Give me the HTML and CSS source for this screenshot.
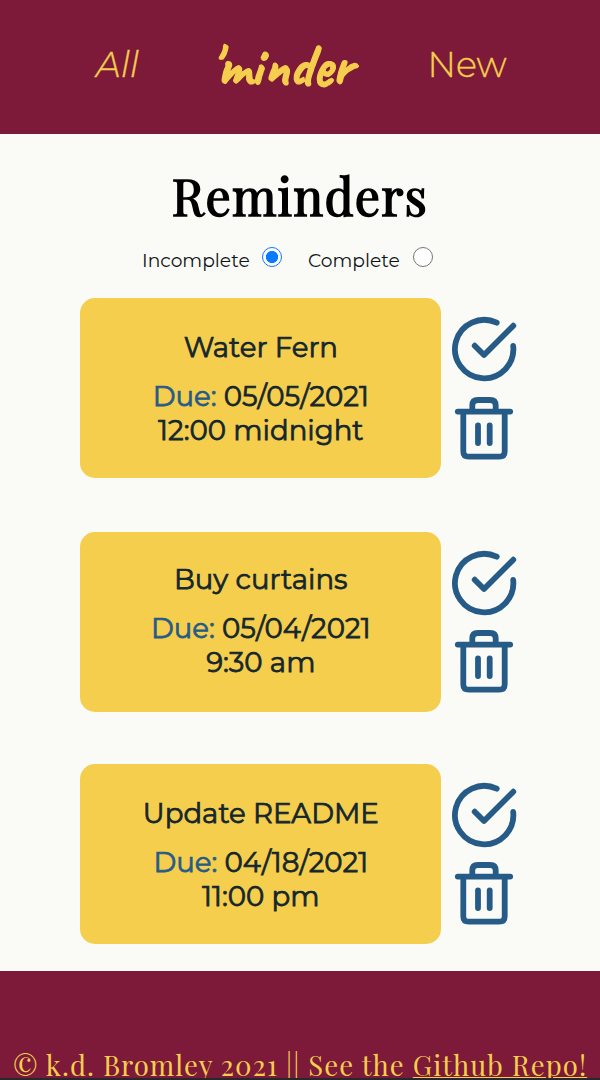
FILE: index.html
```html
<!DOCTYPE html>
<html lang="en">
<head>
<meta charset="utf-8">
<title>'minder</title>
<link rel="stylesheet" href="styles.css">
</head>
<body>
<svg class="defs" width="0" height="0" aria-hidden="true">
  <symbol id="check" viewBox="0 0 66 66"><path d="M45.7 6.7A29.2 29.2 0 1 0 62.2 30M23.7 29.7L33 39L62.3 9.7"/></symbol>
  <symbol id="trash" viewBox="0 0 66 66"><path d="M6.8 17.6H59.2M12.3 17.6V57.2Q12.3 62.7 17.8 62.7H48.2Q53.7 62.7 53.7 57.2V17.6M21.3 17.6V11.5Q21.3 6 26.8 6H39.2Q44.7 6 44.7 11.5V17.6M27 31.5V49M38.7 31.5V49"/></symbol>
</svg>
<header class="header">
  <a class="nav nav-all">All</a>
  <div class="logo">'minder</div>
  <a class="nav nav-new">New</a>
</header>
<main class="main">
  <h1 class="title">Reminders</h1>
  <form class="filters">
    <label class="filter"><span class="label incomplete">Incomplete</span><input class="radio" type="radio" name="state" checked></label>
    <label class="filter"><span class="label complete">Complete</span><input class="radio" type="radio" name="state"></label>
  </form>
  <section class="list">
    <article class="row">
      <div class="card">
        <h2 class="name">Water Fern</h2>
        <p class="line"><span class="due">Due:</span> 05/05/2021</p>
        <p class="line">12:00 midnight</p>
      </div>
      <div class="actions"><svg class="icon"><use href="#check"/></svg><svg class="icon"><use href="#trash"/></svg></div>
    </article>
    <article class="row second">
      <div class="card">
        <h2 class="name">Buy curtains</h2>
        <p class="line"><span class="due">Due:</span> 05/04/2021</p>
        <p class="line">9:30 am</p>
      </div>
      <div class="actions"><svg class="icon"><use href="#check"/></svg><svg class="icon"><use href="#trash"/></svg></div>
    </article>
    <article class="row third">
      <div class="card">
        <h2 class="name">Update README</h2>
        <p class="line"><span class="due">Due:</span> 04/18/2021</p>
        <p class="line">11:00 pm</p>
      </div>
      <div class="actions"><svg class="icon"><use href="#check"/></svg><svg class="icon"><use href="#trash"/></svg></div>
    </article>
  </section>
</main>
<footer class="footer"><p class="credit">© k.d. Bromley 2021 || See the <a class="repo">Github Repo!</a></p></footer>
</body>
</html>
```
FILE: styles.css
```css
* { box-sizing: border-box; }
body { margin: 0; height: 1080px; overflow: hidden; display: flex; flex-direction: column; background: #fafbf7; font-family: Montserrat, Inter, sans-serif; color: #14262e; }
h1, h2, p { margin: 0; font-weight: 400; }
.defs { position: absolute; }
.header { height: 133.5px; flex: none; background: #7d1a39; color: #f5ce4d; display: grid; grid-template-columns: 200px 178px 178px; }
.nav { font-size: 35px; font-weight: 300; line-height: 44px; padding-top: 43px; text-align: center; -webkit-text-stroke: .35px currentColor; }
.nav-all { font-style: italic; padding-left: 35px; }
.logo { font-family: Caveat, "Caveat Brush", Lato, sans-serif; font-weight: 700; font-size: 58.5px; line-height: 60px; padding: 36px 15px 0 0; text-align: center; white-space: nowrap; -webkit-text-stroke: 1.2px currentColor; }
.main { height: 837.5px; flex: none; }
.title { font-family: "Playfair Display", "Liberation Serif", serif; font-size: 50px; line-height: 60px; height: 104px; padding-top: 32px; text-align: center; letter-spacing: 1.2px; color: #000; -webkit-text-stroke: 1.5px #000; }
.filters { height: 60.3px; display: flex; padding: 5px 0 0 142px; gap: 26px; color: #101316; }
.filter { display: flex; height: 28px; gap: 12px; }
.label { font-size: 18.7px; line-height: 28px; padding-top: 4px; white-space: nowrap; }
.incomplete { width: 108px; }
.complete { width: 93px; }
.radio { appearance: none; margin: 4.5px 0 0; width: 20px; height: 20px; border-radius: 50%; border: 1.5px solid #777; background: #fff; }
.radio:checked { border-color: #0a7aff; background: radial-gradient(circle, #0a7aff 5.7px, #fff 6.4px); }
.list { display: flex; flex-direction: column; gap: 53px; padding-left: 80.3px; }
.row { display: flex; gap: 10px; height: 180.2px; }
.second { margin: .7px 0 -.7px; }
.card { width: 361px; border-radius: 15px; background: #f5ce4d; padding-top: 29px; text-align: center; font-size: 27.6px; -webkit-text-stroke: .75px currentColor; }
.name { font-size: 27.6px; line-height: 40px; height: 52px; }
.line { line-height: 34px; }
.second .card { padding-top: 27.3px; }
.due { color: #265b87; }
.actions { display: flex; flex-direction: column; gap: 12px; padding-top: 18.3px; }
.second .actions, .third .actions { gap: 11px; }
.icon { width: 66px; height: 66px; display: block; fill: none; stroke: #265b87; stroke-width: 5.8; stroke-linecap: round; stroke-linejoin: round; }
.footer { flex: 1; background: #7d1a39; border-bottom: 2px solid #26282a; overflow: hidden; }
.credit { font-family: "Playfair Display", "Liberation Serif", serif; color: #f5ce4d; font-size: 27.5px; line-height: 40px; padding: 74px 0 0 13px; letter-spacing: 1.07px; white-space: nowrap; }
.repo { text-decoration: underline; text-decoration-thickness: 2px; text-decoration-skip-ink: auto; text-underline-offset: 1px; }
```
